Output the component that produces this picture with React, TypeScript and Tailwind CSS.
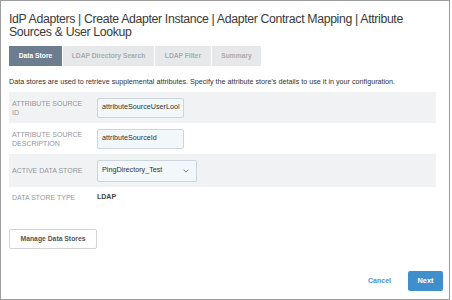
import React from "react";

const labelCls =
  "w-[88px] shrink-0 pl-[3px] pr-[9px] text-[7px] leading-[9px] uppercase text-[#94979b]";

export default function App() {
  return (
    <div className="w-[452px] h-[300px] bg-white font-['Liberation_Sans',Arial,sans-serif]">
      <div className="w-[450px] h-[300px] border border-[#9c9c9c] flex flex-col pl-[8px]">
        <div className="w-[410px] pt-[12px] text-[12.3px] leading-[13px] tracking-[-0.35px] text-[#3a3a3a]">
          IdP Adapters | Create Adapter Instance | Adapter Contract Mapping | Attribute Sources &amp; User Lookup
        </div>

        <div className="mt-[7px] flex gap-[1px] text-[6.7px] font-bold">
          <div className="h-[20px] w-[53px] flex items-center justify-center bg-[#6b7d8f] text-white">
            Data Store
          </div>
          <div className="h-[20px] w-[91px] flex items-center justify-center bg-[#e7e8ea] text-[#a8acb1]">
            LDAP Directory Search
          </div>
          <div className="h-[20px] w-[56px] flex items-center justify-center bg-[#e7e8ea] text-[#a8acb1]">
            LDAP Filter
          </div>
          <div className="h-[20px] w-[49px] flex items-center justify-center bg-[#e7e8ea] text-[#a8acb1]">
            Summary
          </div>
        </div>

        <div className="mt-[11px] text-[7.2px] leading-[10px] text-[#333] whitespace-nowrap">
          Data stores are used to retrieve supplemental attributes. Specify the attribute store's details to use it in your configuration.
        </div>

        <div className="mt-[5px] mr-[13px] flex flex-col">
          <div className="h-[31px] flex items-center bg-[#f1f2f4]">
            <div className={labelCls}>Attribute Source ID</div>
            <div className="w-[87px] h-[20px] rounded-[2px] border border-[#cdd6dc] bg-[#f2f7f9] flex items-center pl-[4px] overflow-hidden whitespace-nowrap text-[7.2px] text-[#333]">
              attributeSourceUserLool
            </div>
          </div>
          <div className="h-[31px] flex items-center bg-white">
            <div className={labelCls}>Attribute Source Description</div>
            <div className="w-[87px] h-[20px] rounded-[2px] border border-[#cdd6dc] bg-[#f2f7f9] flex items-center pl-[4px] overflow-hidden whitespace-nowrap text-[7.2px] text-[#333]">
              attributeSourceId
            </div>
          </div>
          <div className="h-[33px] flex items-center bg-[#f1f2f4]">
            <div className={labelCls}>Active Data Store</div>
            <div className="w-[100px] h-[22px] rounded-[2px] border border-[#cdd6dc] bg-[#f2f7f9] flex items-center justify-between pl-[4px] pr-[7px] text-[7.2px] text-[#333]">
              <span>PingDirectory_Test</span>
              <svg width="6" height="4" viewBox="0 0 6 4" fill="none">
                <path d="M0.6 0.7 L3 3.1 L5.4 0.7" stroke="#6b7680" strokeWidth="0.9" />
              </svg>
            </div>
          </div>
          <div className="h-[20px] flex items-center">
            <div className={labelCls}>Data Store Type</div>
            <div className="text-[7px] font-bold text-[#444]">LDAP</div>
          </div>
        </div>

        <div className="mt-[22px]">
          <button className="w-[88px] h-[20px] border border-[#d4d4d4] rounded-[2px] bg-white text-[6.8px] font-bold text-[#555] flex items-center justify-center">
            Manage Data Stores
          </button>
        </div>

        <div className="mt-auto pb-[8px] pr-[6px] flex justify-end items-center">
          <span className="text-[7px] font-bold text-[#4a92cc] mr-[17px]">Cancel</span>
          <button className="w-[35px] h-[20px] rounded-[2px] bg-[#3f8fcc] text-white text-[7.4px] font-bold flex items-center justify-center">
            Next
          </button>
        </div>
      </div>
    </div>
  );
}
